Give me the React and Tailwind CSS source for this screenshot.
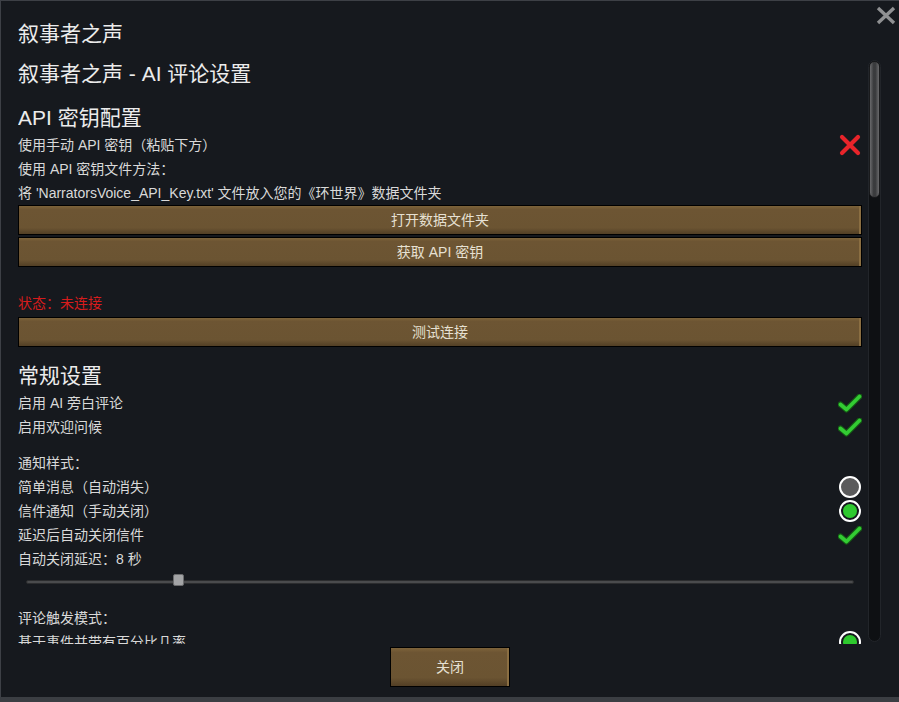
import React from 'react';

const FONT = { fontFamily: '"Liberation Sans", "Noto Sans CJK SC", sans-serif' };

function Check() {
  return (
    <svg width="24" height="19" viewBox="0 0 24 19">
      <path d="M2.5 10.5 L8.5 15.5 L21.5 2.5" fill="none" stroke="#155a15" strokeWidth="6" strokeLinecap="round" strokeLinejoin="round" />
      <path d="M2.5 10.5 L8.5 15.5 L21.5 2.5" fill="none" stroke="#33cc33" strokeWidth="3.6" strokeLinecap="round" strokeLinejoin="round" />
    </svg>
  );
}

function Cross() {
  return (
    <svg width="22" height="22" viewBox="0 0 22 22">
      <path d="M3 3 L19 19 M19 3 L3 19" fill="none" stroke="#e8242a" strokeWidth="4.2" strokeLinecap="round" />
    </svg>
  );
}

function Radio({ on }) {
  if (on) {
    return (
      <div className="w-[22px] h-[22px] rounded-full border-2 border-white bg-[#15181c] flex items-center justify-center">
        <div className="w-[14px] h-[14px] rounded-full bg-[#2ec92e]" />
      </div>
    );
  }
  return <div className="w-[22px] h-[22px] rounded-full border-2 border-white bg-[#5b5b5c]" />;
}

function Row({ children, right, className = '' }) {
  return (
    <div className={`h-[24px] shrink-0 flex items-center justify-between text-[14px] text-[#d9d9d9] ${className}`}>
      <span>{children}</span>
      {right && <span className="w-[24px] flex justify-center">{right}</span>}
    </div>
  );
}

function Button({ children, className = '' }) {
  return (
    <div
      className={`h-[30px] shrink-0 flex items-center justify-center border border-black text-[14px] text-[#e6e0d2] bg-[linear-gradient(to_bottom,#7d633a_0%,#6d5533_12%,#6b5432_78%,#523f25_100%)] shadow-[inset_-2px_0_0_#8a6e42] ${className}`}
    >
      {children}
    </div>
  );
}

function Heading({ children, className = '' }) {
  return <div className={`h-[30px] shrink-0 flex items-center text-[21px] text-[#ececec] ${className}`}>{children}</div>;
}

export default function App() {
  return (
    <div className="w-[899px] h-[702px] bg-[#3b3e43] flex flex-col" style={FONT}>
      <div className="relative h-[697px] bg-[#16191e] border-l border-t border-[#3d4046] flex flex-col pl-[17px]">
        <div className="absolute right-[3px] top-[5px]">
          <svg width="20" height="19" viewBox="0 0 20 19">
            <path d="M2 2 L18 17 M18 2 L2 17" fill="none" stroke="#8f9092" strokeWidth="3.4" />
          </svg>
        </div>

        <div className="h-[24px] mt-[21px] flex items-center text-[21px] text-[#ececec]">叙事者之声</div>

        <div className="mt-[14px] h-[584px] flex items-start overflow-hidden">
          <div className="w-[844px] flex flex-col shrink-0">
            <div className="h-[28px] shrink-0 flex items-center text-[21px] text-[#ececec]">叙事者之声 - AI 评论设置</div>

            <Heading className="mt-[15px]">API 密钥配置</Heading>
            <Row right={<Cross />}>使用手动 API 密钥（粘贴下方）</Row>
            <Row>使用 API 密钥文件方法：</Row>
            <Row>将 'NarratorsVoice_API_Key.txt' 文件放入您的《环世界》数据文件夹</Row>
            <Button>打开数据文件夹</Button>
            <Button className="mt-[2px]">获取 API 密钥</Button>
            <div className="h-[24px] shrink-0" />
            <Row className="!text-[#d61c1c]">状态：未连接</Row>
            <Button className="mt-[2px]">测试连接</Button>

            <Heading className="mt-[14px]">常规设置</Heading>
            <Row right={<Check />}>启用 AI 旁白评论</Row>
            <Row right={<Check />}>启用欢迎问候</Row>
            <div className="h-[12px] shrink-0" />
            <Row>通知样式：</Row>
            <Row right={<Radio />}>简单消息（自动消失）</Row>
            <Row right={<Radio on />}>信件通知（手动关闭）</Row>
            <Row right={<Check />}>延迟后自动关闭信件</Row>
            <Row>自动关闭延迟：8 秒</Row>
            <div className="h-[22px] shrink-0 relative flex items-center px-[8px]">
              <div className="h-[4px] w-full rounded-full bg-[#4a4b4d] border border-[#2b2c2e]" />
              <div className="absolute left-[155px] top-[3px] w-[11px] h-[12px] rounded-[2px] bg-[#a3a4a6] border border-[#6a6b6d]" />
            </div>
            <div className="h-[13px] shrink-0" />
            <Row>评论触发模式：</Row>
            <Row right={<Radio on />}>基于事件并带有百分比几率</Row>
          </div>

          <div className="ml-[6px] w-[13px] h-[582px] shrink-0 rounded-full bg-[#0e1013] border border-[#22252a] flex flex-col">
            <div className="h-[137px] rounded-full bg-[linear-gradient(to_right,#6a6a6c,#3a3b3d_40%,#3a3b3d_60%,#6a6a6c)] border border-[#1a1b1d]" />
          </div>
        </div>

        <div className="flex justify-center mt-[3px] pr-[17px]">
          <Button className="w-[120px] !h-[40px]">关闭</Button>
        </div>
      </div>
    </div>
  );
}
